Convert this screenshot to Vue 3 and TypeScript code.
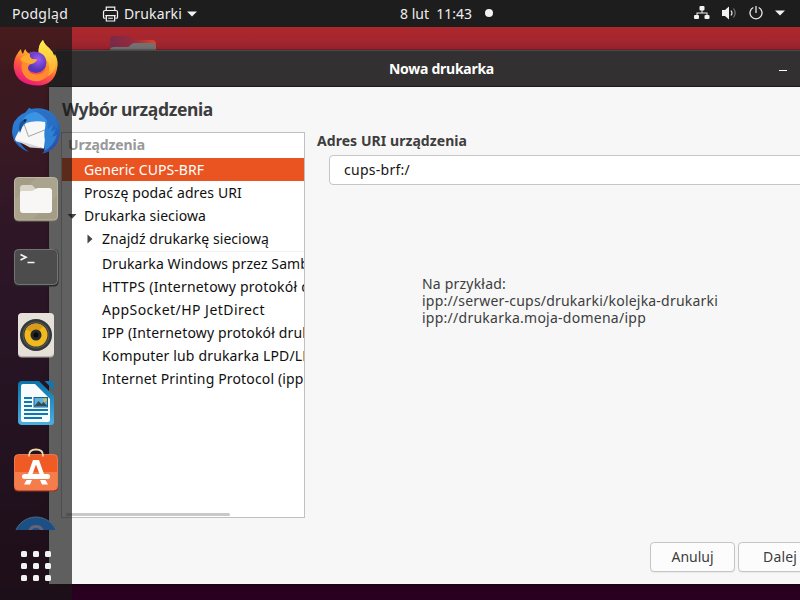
<script setup lang="ts">
interface Row {
  text: string
  width: number
  level: number
  arrow?: 'down' | 'right'
  selected?: boolean
  separated?: boolean
}

const rows: Row[] = [
  { text: 'Generic CUPS-BRF', width: 120, level: 0, selected: true },
  { text: 'Proszę podać adres URI', width: 158, level: 0 },
  { text: 'Drukarka sieciowa', width: 122, level: 0, arrow: 'down' },
  { text: 'Znajdź drukarkę sieciową', width: 167, level: 1, arrow: 'right' },
  { text: 'Drukarka Windows przez Samb', width: 207, level: 1, separated: true },
  { text: 'HTTPS (Internetowy protokół d', width: 208, level: 1 },
  { text: 'AppSocket/HP JetDirect', width: 163, level: 1 },
  { text: 'IPP (Internetowy protokół druk', width: 208, level: 1 },
  { text: 'Komputer lub drukarka LPD/LP', width: 209, level: 1 },
  { text: 'Internet Printing Protocol (ipp)', width: 206, level: 1 },
]

// Tracks a label in or out so that it occupies the given width.
const vFit = {
  mounted(el: HTMLElement, binding: { value: number }) {
    const count = (el.textContent ?? '').length
    const natural = el.getBoundingClientRect().width
    el.style.letterSpacing = `${(binding.value - natural) / count}px`
  },
}
</script>

<template>
  <div class="desktop">
    <header class="topbar">
      <span class="activities"><span v-fit="56" class="fit">Podgląd</span></span>
      <div class="appmenu">
        <svg width="17" height="18" viewBox="0 0 18 18" fill="none" stroke="#f2f2f2" stroke-width="1.3">
          <path d="M4.5 5V1.6h9V5M4 13.5H2.6Q1.6 13.5 1.6 12.500V7Q1.600 5.300 3.300 5.300H14.700Q16.400 5.300 16.400 7v5.500q0 1-1 1H14" />
          <path d="M4.600 10.600h8.800v5.800H4.600zM3.500 10.600h11M6.500 13.500h5" />
        </svg>
        <span v-fit="58" class="fit">Drukarki</span>
        <svg width="10" height="6" viewBox="0 0 10 6"><path d="M0 .5h10L5 5.500z" fill="#f2f2f2" /></svg>
      </div>
      <div class="clock">
        <span v-fit="72" class="fit">8 lut&nbsp; 11:43</span>
        <i class="dot"></i>
      </div>
      <div class="status">
        <svg width="16" height="14" viewBox="0 0 16 14" fill="#f2f2f2">
          <rect x="5.500" y="0" width="5" height="4.500" rx="1" />
          <rect x="0" y="9" width="5" height="4" rx="1" />
          <rect x="10.500" y="9" width="5" height="4" rx="1" />
          <path d="M7.500 4h1v2.500h5V9h-1V7.500h-9V9h-1V6.500h5z" />
        </svg>
        <svg width="15" height="14" viewBox="0 0 15 14">
          <path d="M0 4h3l4-3.500v13L3 10H0z" fill="#f2f2f2" />
          <path d="M9 4.500q2 2.500 0 5" fill="none" stroke="#e8e8e8" stroke-width="1.200" />
          <path d="M11.500 2.500q3.300 4.500 0 9" fill="none" stroke="#777" stroke-width="1.200" />
        </svg>
        <svg width="14" height="14" viewBox="0 0 14 14" fill="none" stroke="#e8e8e8" stroke-width="1.300">
          <path d="M4.300 1.500a6 6 0 1 0 5.400 0M7 0v7" />
        </svg>
        <svg width="10" height="6" viewBox="0 0 10 6"><path d="M0 .5h10L5 5.500z" fill="#f2f2f2" /></svg>
      </div>
    </header>

    <svg class="folder" width="46" height="20" viewBox="0 0 46 20">
      <defs>
        <linearGradient id="fold"><stop offset="0" stop-color="#782b4b" /><stop offset=".5" stop-color="#97293c" /><stop offset="1" stop-color="#dc4526" /></linearGradient>
      </defs>
      <path d="M0 20V4Q0 0 4 0h13q2 0 3.500 2T24 4h18q4 0 4 4v12z" fill="url(#fold)" />
      <path d="M0 20v-6q0-3 4-3h13q2 0 3.500-2T24 7h18q4 0 4 4v9z" fill="#757273" />
    </svg>

    <section class="window">
      <div class="titlebar">
        <span v-fit="105" class="fit">Nowa drukarka</span>
        <i class="minimize"></i>
      </div>
      <div class="content">
        <h1><span v-fit="151" class="fit">Wybór urządzenia</span></h1>
        <div class="panes">
          <div class="tree">
            <div class="tree-head"><span v-fit="77" class="fit">Urządzenia</span></div>
            <div
              v-for="row in rows"
              :key="row.text"
              class="row"
              :class="{ selected: row.selected, child: row.level === 1, separated: row.separated }"
            >
              <span class="expander">
                <svg v-if="row.arrow === 'down'" width="10" height="5" viewBox="0 0 10 5"><path d="M.5 0h9L5 4.800z" fill="#454545" /></svg>
                <svg v-if="row.arrow === 'right'" width="6" height="10" viewBox="0 0 6 10"><path d="M.5 .5v9L5.500 5z" fill="#454545" /></svg>
              </span>
              <span v-fit="row.width" class="fit">{{ row.text }}</span>
            </div>
            <i class="scrollbar"></i>
          </div>
          <div class="details">
            <h2><span v-fit="150" class="fit">Adres URI urządzenia</span></h2>
            <div class="entry"><span v-fit="66" class="fit">cups-brf:/</span></div>
            <div class="example">
              <span v-fit="84" class="fit">Na przykład:</span>
              <span v-fit="296" class="fit">ipp://serwer-cups/drukarki/kolejka-drukarki</span>
              <span v-fit="224" class="fit">ipp://drukarka.moja-domena/ipp</span>
            </div>
          </div>
        </div>
        <div class="actions">
          <button><span v-fit="42" class="fit">Anuluj</span></button>
          <button><span v-fit="34" class="fit">Dalej</span></button>
        </div>
      </div>
    </section>

    <nav class="dock">
      <div class="apps">
        <div class="app">
          <svg width="48" height="48" viewBox="0 0 48 48">
            <defs>
              <linearGradient id="fx" x1=".8" y1="0" x2=".35" y2="1">
                <stop offset=".1" stop-color="#ffe74a" /><stop offset=".4" stop-color="#ffb02e" /><stop offset=".65" stop-color="#ff5b3c" /><stop offset="1" stop-color="#ec1480" />
              </linearGradient>
              <radialGradient id="fxg" cx=".6" cy=".35"><stop offset="0" stop-color="#a05cf5" /><stop offset="1" stop-color="#5536b8" /></radialGradient>
              <linearGradient id="fxt" x1="0" y1="0" x2="0" y2="1"><stop offset="0" stop-color="#fff04e" /><stop offset="1" stop-color="#ffa42c" /></linearGradient>
            </defs>
            <path d="M9 10q0 3 2 5 1-4 2.500-5 .5 3 4 4.500h9q0-9 4.500-13.500 1 4 6 8 4 3.500 5 8l1-2q4 8 2 15-3 16-19 16.500Q5 46 2 30q-1-7 2-13 2-4 5-7z" fill="url(#fx)" />
            <path d="M26.500 14.500Q26 5 31 1q1 4 6 8 8 7 6 20-3 8-10 9 5-6 4-13-2-7-10.500-10.500z" fill="url(#fxt)" />
            <circle cx="24" cy="23.500" r="10.500" fill="url(#fxg)" />
            <path d="M8 20q5-5 10-5-1 3 2 5l5 .5q-1 3-6 4.500-3 1-3 5 1 5 8 5.500 10 0 12-10 4 9-3 14-10 6-19-1-6-6-4-15z" fill="#ff8a30" />
            <path d="M8 20q5-5 10-5-1 3 2 5l5 .5q-1 3-6 4.500-7-1-11-5z" fill="#ffab2d" />
            <path d="M16 14q6-3 12 0-5 0-7 2z" fill="#7940c9" />
          </svg>
        </div>
        <div class="app">
          <svg width="48" height="48" viewBox="0 0 48 48">
            <defs><linearGradient id="tb" x1="0" y1="0" x2="1" y2="1"><stop offset="0" stop-color="#2f7fd6" /><stop offset=".55" stop-color="#2173cb" /><stop offset="1" stop-color="#30449f" /></linearGradient></defs>
            <path d="M10 7q4-1 6-5 2-2 3 0Q34-1 42 8q7 8 6 18-2 18-18 20.500 3-2 3.500-5.500L8 36q4 6 9 9Q1 39 0 25 0 13 10 7z" fill="url(#tb)" />
            <path d="M10 15q3-9 13-10 9 0 13 7l-2 6q-8-4-18-1l-7 3z" fill="#3c93e2" />
            <path d="M20 3q16-2 23 9 3 5 3 11-4-7-10-8-5-8-16-12z" fill="#2c6fc2" />
            <path d="M14 16q9-3 19-1l1 7-2 19.500L2.500 34q2-9 11.500-18z" fill="#f7f7f8" />
            <path d="m12 17 4.500 12.500L34 22.500" fill="none" stroke="#a3a5a9" />
            <path d="m4 33 14 4 14 4.500-14-1z" fill="#d5d4dc" />
            <path d="M8 16q3-4 7-4-1 4-4 6l-3 8q-2-5 0-10z" fill="#1d5396" />
            <circle cx="13" cy="13.500" r="1.300" fill="#15294b" />
            <path d="m35 15 1 7 5-5-2 8 5-3-4 8 5-2q-4 12-13 16 2-9 .500-13-1-8 2.500-16z" fill="#2d82d6" />
            <path d="M.5 23q0 9 7 15 4 5 9 6.500Q4 40 1 29z" fill="#2f56b6" />
          </svg>
        </div>
        <div class="app">
          <svg width="48" height="48" viewBox="0 0 48 48">
            <rect x="2" y="2.500" width="44" height="44" rx="4.500" fill="#767160" />
            <rect x="2.500" y="2.500" width="43" height="42.500" rx="4" fill="#a39c86" stroke="#bcb6a3" />
            <path d="M3 42V24L24 3h18q3 0 3 3v15L20 45H6q-3 0-3-3z" fill="#b0aa95" opacity=".55" />
            <path d="M8 13q0-3 3-3h8q2 0 3 2l1.500 2H36v6H8z" fill="#d9d4c6" />
            <path d="M8 18q0-2 2-2h9q2 0 3.500-1.500T26 13h11q3 0 3 3v19q0 3-3 3H11q-3 0-3-3z" fill="#f8f7f5" />
          </svg>
        </div>
        <div class="app">
          <svg width="48" height="48" viewBox="0 0 48 48">
            <rect x="2" y="6" width="44.500" height="37.500" rx="4.500" fill="#292929" />
            <rect x="2.500" y="6.500" width="43" height="35" rx="4" fill="#4c4c4c" stroke="#747474" />
            <path d="m8.500 11.500 5.500 2.800L8.500 17M15.500 19.500H22.500" fill="none" stroke="#f5f5f5" stroke-width="1.700" />
          </svg>
        </div>
        <div class="app">
          <svg width="48" height="48" viewBox="0 0 48 48">
            <rect x="6" y="2.500" width="36" height="44" rx="4" fill="#b9b5a9" />
            <rect x="6" y="2" width="36" height="43" rx="4" fill="#e5e1d8" />
            <circle cx="24" cy="24" r="16" fill="#343638" />
            <circle cx="24" cy="24" r="13" fill="none" stroke="#53575a" stroke-width="1.200" />
            <circle cx="24" cy="24" r="11.500" fill="#f0b91d" />
            <path d="M14 18a11.500 11.500 0 0 1 17-3l-7 9z" fill="#d89c19" />
            <circle cx="24" cy="24" r="5.500" fill="#26282b" />
            <circle cx="24" cy="24" r="2.500" fill="#080a0c" />
          </svg>
        </div>
        <div class="app">
          <svg width="48" height="48" viewBox="0 0 48 48">
            <defs><linearGradient id="lo" x1="0" y1="0" x2="0" y2="1"><stop offset="0" stop-color="#0873aa" /><stop offset="1" stop-color="#4bafe1" /></linearGradient></defs>
            <path d="M10 2h17l15 15v26q0 3-3 3H10q-4 0-4-4V6q0-4 4-4z" fill="url(#lo)" />
            <path d="M32.500 2H39q3 0 3 3v6.500z" fill="#1377ae" />
            <path d="M11 5h12l15 15v21q0 2-2 2H11q-2 0-2-2V7q0-2 2-2z" fill="#f8fbfd" />
            <path d="M12 19h8M12 23h8M12 27h8M12 31h24M12 35h24M12 39h18" stroke="#087bb4" stroke-width="1.800" />
            <rect x="22" y="18.500" width="13.500" height="9.500" fill="#5db2df" stroke="#14628b" />
            <path d="m22.500 27 4-5 3 3 2-2 4 4z" fill="#314e55" /><circle cx="33" cy="21" r="1.800" fill="#f5b52b" />
          </svg>
        </div>
        <div class="app">
          <svg width="48" height="48" viewBox="0 0 48 48">
            <rect x="2" y="8" width="44" height="36.500" rx="4" fill="#9c3618" />
            <rect x="2.500" y="7.500" width="43" height="35.500" rx="4" fill="#f05a25" stroke="#f4875c" stroke-width=".8" />
            <path d="M3 25h42v14q0 4-4 4H7q-4 0-4-4z" fill="#f47d4b" />
            <path d="M17 9.500V8.500q0-6 7-6 7 0 7 6v1" fill="none" stroke="#f3d8ac" stroke-width="1.800" />
            <path d="m16 27 5-14h6l5 14h-4.500L24 17.500 20.500 27zM14.500 33h5.500l-2 4.500h-6zM28 33h5.500l2.500 4.500h-6z" fill="#fff" />
            <rect x="10" y="27" width="28" height="5" rx="2.500" fill="#fff" />
          </svg>
        </div>
        <div class="app">
          <svg width="48" height="48" viewBox="0 0 48 48">
            <circle cx="24" cy="24" r="22" fill="#1c4f83" stroke="#496985" />
            <path d="M18 15.500q1-4 6-4t6 4" fill="none" stroke="#656375" stroke-width="3" />
          </svg>
        </div>
      </div>
      <div class="grid"><i v-for="n in 9" :key="n"></i></div>
    </nav>
  </div>
</template>

<style>
body {
  margin: 0;
  overflow: hidden;
}
</style>

<style scoped>
.desktop {
  position: relative;
  width: 800px;
  height: 600px;
  overflow: hidden;
  box-sizing: border-box;
  background: linear-gradient(180deg, #ae282d 27px, #8c2132 70px, #7c2040 150px, #60184b 230px, #4c1245 320px, #3f0c38 430px, #2c0020 584px, #28001f 600px);
  font-family: "Noto Sans", "Open Sans", sans-serif;
  font-size: 14px;
}
.fit {
  display: inline-block;
  white-space: pre;
}
.topbar {
  position: relative;
  display: grid;
  grid-template-columns: 102px 298px 1fr auto;
  align-items: center;
  height: 27px;
  padding-right: 15px;
  background: #1d1d1d;
  color: #eee;
}
.topbar svg {
  display: block;
}
.activities {
  padding-left: 12px;
}
.appmenu {
  display: flex;
  align-items: center;
  gap: 5px;
}
.clock {
  display: flex;
  align-items: center;
  gap: 13px;
  height: 26px;
  align-self: start;
}
.dot {
  width: 8px;
  height: 8px;
  border-radius: 50%;
  background: #f2f2f2;
}
.status {
  display: flex;
  align-items: center;
  gap: 12px;
  height: 26px;
  align-self: start;
}
.folder {
  position: absolute;
  left: 110px;
  top: 36px;
}
.window {
  position: absolute;
  left: 49px;
  top: 50px;
  display: flex;
  flex-direction: column;
  width: 785px;
  height: 534px;
  border-radius: 8px 8px 0 0;
  background: #f7f7f7;
  box-shadow: 0 0 0 1px rgba(0, 0, 0, 0.2), 0 2px 8px rgba(0, 0, 0, 0.3);
}
.titlebar {
  position: relative;
  display: flex;
  align-items: center;
  justify-content: center;
  box-sizing: border-box;
  height: 37px;
  border-top: 1px solid #4a4848;
  border-bottom: 1px solid #1c1b1b;
  border-radius: 8px 8px 0 0;
  background: #323030;
  color: #fff;
  font-weight: 700;
}
.minimize {
  position: absolute;
  left: 730px;
  top: 19px;
  width: 8px;
  height: 1px;
  background: #fff;
}
.content {
  display: flex;
  flex: 1;
  flex-direction: column;
  padding: 0 12px 12px;
  color: #3d3d3d;
}
h1 {
  margin: 0;
  height: 45px;
  padding-left: 1px;
  font-size: 17.500px;
  line-height: 45px;
}
.panes {
  display: flex;
  gap: 12px;
}
.tree {
  position: relative;
  box-sizing: border-box;
  width: 244px;
  height: 386px;
  overflow: hidden;
  border: 1px solid #c0c0c0;
  background: #fff;
  color: #101010;
}
.tree-head {
  height: 25px;
  padding-left: 6px;
  line-height: 24px;
  color: #999;
  font-weight: 700;
}
.row {
  display: flex;
  align-items: center;
  height: 23px;
}
.row.selected {
  background: #e95420;
  color: #fff;
}
.row.separated {
  margin-left: 38px;
  border-top: 1px solid #f1f1f1;
  margin-top: 1px;
}
.expander {
  flex: none;
  display: flex;
  justify-content: flex-start;
  width: 17px;
  padding: 1px 0 0 5px;
}
.child .expander {
  width: 15px;
  padding: 0 0 0 25px;
}
.separated .expander {
  width: 2px;
  padding-left: 0;
}
.scrollbar {
  position: absolute;
  left: 4px;
  bottom: 1px;
  width: 164px;
  height: 3px;
  border-radius: 2px;
  background: #c9c9c9;
}
.details {
  flex: 1;
}
h2 {
  margin: 0;
  height: 23px;
  font-size: 14px;
  line-height: 17px;
}
.entry {
  box-sizing: border-box;
  height: 30px;
  margin-left: 12px;
  padding-left: 14px;
  border: 1px solid #c5c5c5;
  border-radius: 4px;
  background: #fff;
  color: #151515;
  line-height: 28px;
}
.example {
  display: flex;
  flex-direction: column;
  align-items: flex-start;
  margin: 90px 0 0 105px;
  line-height: 17px;
}
.actions {
  display: flex;
  justify-content: flex-end;
  gap: 3px;
  margin-top: auto;
}
button {
  box-sizing: border-box;
  width: 85px;
  height: 30px;
  padding: 0 0 2px;
  border: 1px solid #c5c5c5;
  border-radius: 4px;
  background: #fcfcfc;
  box-shadow: 0 1px 1px rgba(0, 0, 0, 0.06);
  color: #3d3d3d;
  font: inherit;
}
button + button {
  width: 84px;
}
.dock {
  position: absolute;
  left: 0;
  top: 27px;
  width: 72px;
  height: 573px;
  background: rgba(24, 22, 22, 0.68);
}
.apps {
  height: 503px;
  padding-top: 2px;
  box-sizing: border-box;
  overflow: hidden;
}
.app {
  display: flex;
  align-items: center;
  justify-content: center;
  height: 68px;
}
.grid {
  display: grid;
  grid-template-columns: repeat(3, 6px);
  grid-auto-rows: 6px;
  gap: 6px;
  padding: 21px 0 0 21px;
}
.grid i {
  border-radius: 1.500px;
  background: #f2f2f2;
}
</style>
